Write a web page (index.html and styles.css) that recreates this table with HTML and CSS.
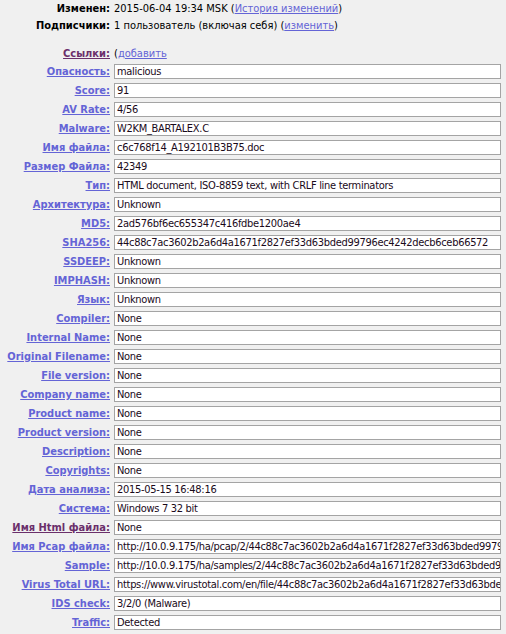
FILE: index.html
```html
<!DOCTYPE html>
<html lang="ru">
<head>
<meta charset="utf-8">
<title>Details</title>
<link rel="stylesheet" href="styles.css">
</head>
<body>
<div class="page">
  <div class="meta">
    <div class="meta-row"><span class="meta-label">Изменен:</span><span class="meta-value">2015-06-04 19:34 MSK (<a class="link" href="#">История изменений</a>)</span></div>
    <div class="meta-row"><span class="meta-label">Подписчики:</span><span class="meta-value">1 пользователь (включая себя) (<a class="link" href="#">изменить</a>)</span></div>
  </div>
  <div class="form">
    <div class="row links-row"><a class="label visited" href="#">Ссылки:</a><span class="plain">(<a class="link" href="#">добавить</a></span></div>
    <div class="row"><a class="label" href="#">Опасность:</a><div class="field">malicious</div></div>
    <div class="row"><a class="label" href="#">Score:</a><div class="field">91</div></div>
    <div class="row"><a class="label" href="#">AV Rate:</a><div class="field">4/56</div></div>
    <div class="row"><a class="label" href="#">Malware:</a><div class="field">W2KM_BARTALEX.C</div></div>
    <div class="row"><a class="label" href="#">Имя файла:</a><div class="field">c6c768f14_A192101B3B75.doc</div></div>
    <div class="row"><a class="label" href="#">Размер Файла:</a><div class="field">42349</div></div>
    <div class="row"><a class="label" href="#">Тип:</a><div class="field">HTML document, ISO-8859 text, with CRLF line terminators</div></div>
    <div class="row"><a class="label" href="#">Архитектура:</a><div class="field">Unknown</div></div>
    <div class="row"><a class="label" href="#">MD5:</a><div class="field">2ad576bf6ec655347c416fdbe1200ae4</div></div>
    <div class="row"><a class="label" href="#">SHA256:</a><div class="field">44c88c7ac3602b2a6d4a1671f2827ef33d63bded99796ec4242decb6ceb66572</div></div>
    <div class="row"><a class="label" href="#">SSDEEP:</a><div class="field">Unknown</div></div>
    <div class="row"><a class="label" href="#">IMPHASH:</a><div class="field">Unknown</div></div>
    <div class="row"><a class="label" href="#">Язык:</a><div class="field">Unknown</div></div>
    <div class="row"><a class="label" href="#">Compiler:</a><div class="field">None</div></div>
    <div class="row"><a class="label" href="#">Internal Name:</a><div class="field">None</div></div>
    <div class="row"><a class="label" href="#">Original Filename:</a><div class="field">None</div></div>
    <div class="row"><a class="label" href="#">File version:</a><div class="field">None</div></div>
    <div class="row"><a class="label" href="#">Company name:</a><div class="field">None</div></div>
    <div class="row"><a class="label" href="#">Product name:</a><div class="field">None</div></div>
    <div class="row"><a class="label" href="#">Product version:</a><div class="field">None</div></div>
    <div class="row"><a class="label" href="#">Description:</a><div class="field">None</div></div>
    <div class="row"><a class="label" href="#">Copyrights:</a><div class="field">None</div></div>
    <div class="row"><a class="label" href="#">Дата анализа:</a><div class="field">2015-05-15 16:48:16</div></div>
    <div class="row"><a class="label" href="#">Система:</a><div class="field">Windows 7 32 bit</div></div>
    <div class="row"><a class="label visited" href="#">Имя Html файла:</a><div class="field">None</div></div>
    <div class="row"><a class="label" href="#">Имя Pcap файла:</a><div class="field">http://10.0.9.175/ha/pcap/2/44c88c7ac3602b2a6d4a1671f2827ef33d63bded99796ec4242decb6ceb66572.pcap</div></div>
    <div class="row"><a class="label" href="#">Sample:</a><div class="field">http://10.0.9.175/ha/samples/2/44c88c7ac3602b2a6d4a1671f2827ef33d63bded99796ec4242decb6ceb66572</div></div>
    <div class="row"><a class="label" href="#">Virus Total URL:</a><div class="field">https://www.virustotal.com/en/file/44c88c7ac3602b2a6d4a1671f2827ef33d63bded99796ec4242decb6ceb66572/analysis/</div></div>
    <div class="row"><a class="label" href="#">IDS check:</a><div class="field">3/2/0 (Malware)</div></div>
    <div class="row"><a class="label" href="#">Traffic:</a><div class="field">Detected</div></div>
  </div>
</div>
</body>
</html>
```
FILE: styles.css
```css
html, body {
  margin: 0;
  padding: 0;
  background: #f0f0f0;
}
body {
  font-family: "DejaVu Sans Condensed", "DejaVu Sans", sans-serif;
  font-stretch: condensed;
  font-size: 11px;
  color: #000;
}
.page {
  width: 501px;
}
.meta {
  display: flex;
  flex-direction: column;
}
.meta-row {
  display: grid;
  grid-template-columns: 110px 1fr;
  column-gap: 4px;
  height: 17px;
  line-height: 17px;
}
.meta-label {
  font-weight: bold;
  text-align: right;
  white-space: nowrap;
}
.meta-value {
  white-space: nowrap;
}
.link {
  color: #6464d6;
  text-decoration: underline;
}
.form {
  display: flex;
  flex-direction: column;
  padding-top: 10px;
}
.row {
  display: grid;
  grid-template-columns: 110px 1fr;
  column-gap: 4px;
  height: 19px;
  align-items: center;
}
.links-row {
  height: 18px;
}
.label {
  font-weight: bold;
  text-align: right;
  color: #6464d6;
  text-decoration: underline;
  white-space: nowrap;
}
.label.visited {
  color: #6b2f6b;
}
.field {
  box-sizing: border-box;
  height: 15px;
  line-height: 13px;
  border: 1px solid #a4a4a4;
  background: #fff;
  padding: 0 2px;
  overflow: hidden;
  white-space: nowrap;
  color: #1a0a1a;
  letter-spacing: -0.3px;
}
.plain {
  white-space: nowrap;
}
```
